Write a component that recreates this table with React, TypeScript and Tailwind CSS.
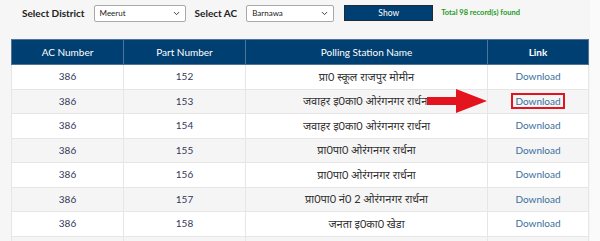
import { ChevronDown } from 'lucide-react'

const rows = [
  { ac: '386', part: '152', name: 'प्रा0 स्कूल राजपुर मोमीन' },
  { ac: '386', part: '153', name: 'जवाहर इ0का0 ओरंगनगर रार्धना', marked: true },
  { ac: '386', part: '154', name: 'जवाहर इ0का0 ओरंगनगर रार्धना' },
  { ac: '386', part: '155', name: 'प्रा0पा0 ओरंगनगर रार्धना' },
  { ac: '386', part: '156', name: 'प्रा0पा0 ओरंगनगर रार्धना' },
  { ac: '386', part: '157', name: 'प्रा0पा0 नं0 2 ओरंगनगर रार्धना' },
  { ac: '386', part: '158', name: 'जनता इ0का0 खेडा' },
]

const FakeSelect = ({ value, width }: { value: string; width: string }) => (
  <div
    className={`${width} h-[17px] flex items-center justify-between bg-white border border-[#a9a9a9] rounded-[2px] pl-[5px] pr-[4px] text-[8px] text-[#222]`}
  >
    <span>{value}</span>
    <ChevronDown className="w-[9px] h-[9px] text-[#333]" strokeWidth={2.5} />
  </div>
)

const App = () => {
  return (
    <div
      className="w-[600px] h-[241px] overflow-hidden flex bg-[#fafafa]"
      style={{ fontFamily: 'Lato, "Noto Sans", sans-serif' }}
    >
      <div className="relative w-[590px] bg-[#f6f6f6]">
        {/* Filter bar */}
        <div className="flex items-center h-[25px] pt-[1px] pl-[22px]">
          <span className="text-[10px] font-bold text-[#222] mr-[9px]">Select District</span>
          <FakeSelect value="Meerut" width="w-[92px]" />
          <span className="text-[10px] font-bold text-[#222] ml-[9px] mr-[9px]">Select AC</span>
          <FakeSelect value="Barnawa" width="w-[88px]" />
          <button className="ml-[10px] w-[89px] h-[16px] bg-[#003f72] border border-[#1d2a38] text-white text-[8.5px]">
            Show
          </button>
          <span className="ml-[8px] text-[7.5px] font-bold text-[#1f9a1f]">Total 98 record(s) found</span>
        </div>

        {/* Polling station table */}
        <table className="ml-[11px] mt-[14px] w-[577px] border-collapse table-fixed text-[10px]">
          <colgroup>
            <col className="w-[112px]" />
            <col className="w-[122px]" />
            <col className="w-[242px]" />
            <col className="w-[101px]" />
          </colgroup>
          <thead>
            <tr className="h-[25px] bg-[#003f72] text-white">
              <th className="font-normal border border-[#4f7399]">AC Number</th>
              <th className="font-normal border border-[#4f7399]">Part Number</th>
              <th className="font-normal border border-[#4f7399]">Polling Station Name</th>
              <th className="font-bold border border-[#4f7399]">Link</th>
            </tr>
          </thead>
          <tbody>
            {rows.map((r, i) => (
              <tr key={r.part} className={`h-[24.5px] ${i % 2 === 0 ? 'bg-white' : 'bg-[#f5f5f5]'}`}>
                <td className="text-center text-[#33375a] border border-[#e6e6e6]">{r.ac}</td>
                <td className="text-center text-[#33375a] border border-[#e6e6e6]">{r.part}</td>
                <td className="text-center text-[#333] text-[11px] border border-[#e6e6e6]">{r.name}</td>
                <td className="text-center border border-[#e6e6e6]">
                  <span
                    className={`text-[#3a6f9e] ${r.marked ? 'inline-block border-2 border-[#e3141d] px-[2px] leading-[10px] py-[1px]' : ''}`}
                  >
                    Download
                  </span>
                </td>
              </tr>
            ))}
            {/* next row peeks in at the bottom edge */}
            <tr className="h-[24.5px] bg-[#f5f5f5]">
              <td className="border border-[#e6e6e6]" />
              <td className="border border-[#e6e6e6]" />
              <td className="border border-[#e6e6e6]" />
              <td className="border border-[#e6e6e6]" />
            </tr>
          </tbody>
        </table>

        {/* Callout arrow pointing at the highlighted link */}
        <svg className="absolute left-[427px] top-[89px]" width="61" height="25" viewBox="0 0 61 25">
          <path d="M0 8 H29 V0 L60 12 L29 24 V16 H0 Z" fill="#e3141d" />
        </svg>
      </div>
    </div>
  )
}

export default App
